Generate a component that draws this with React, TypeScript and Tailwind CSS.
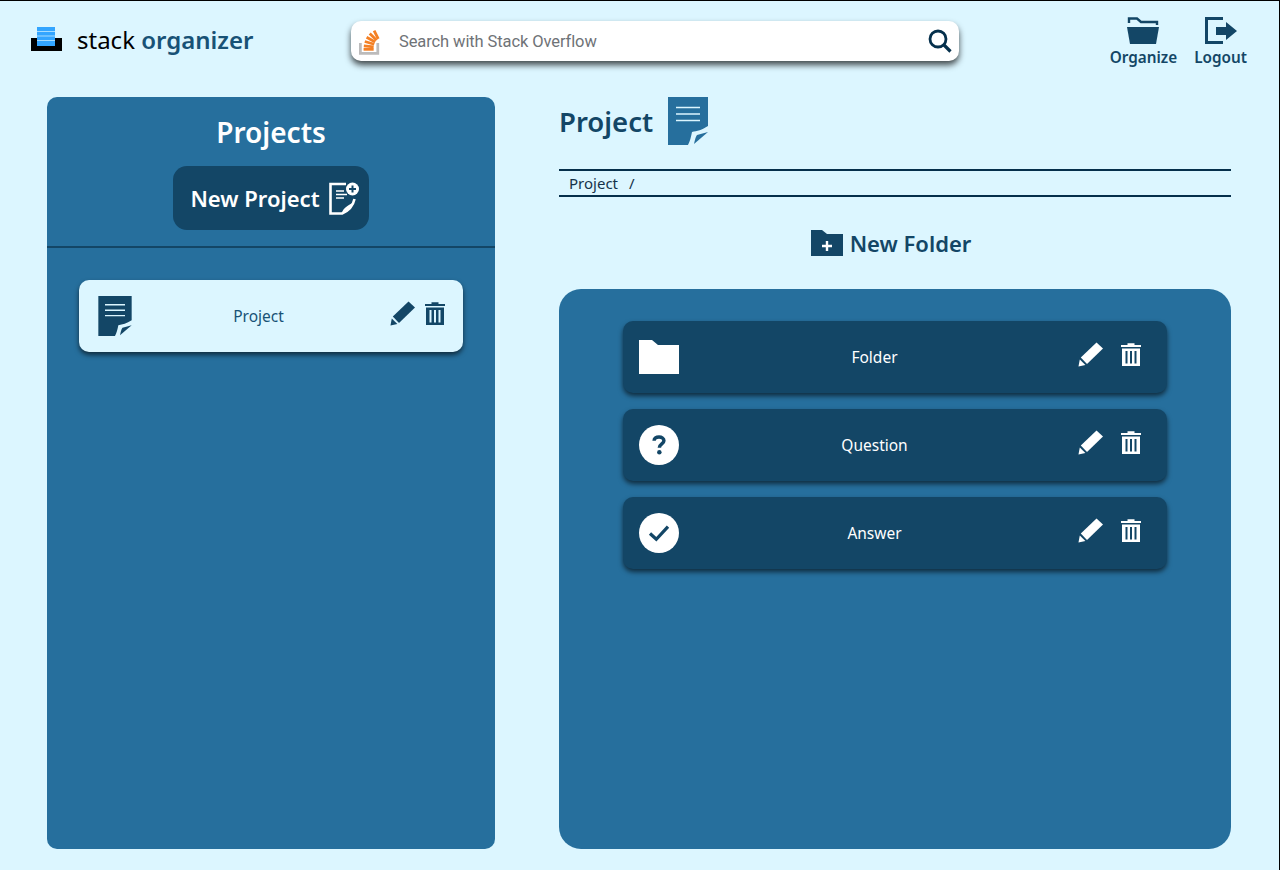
const navy = "#134666";

const NoteIcon = ({ page, fold, className }: { page: string; fold: string; className?: string }) => (
  <svg viewBox="0 0 40 48" className={className}>
    <path d="M0 0H40V29C34 33 29 34 24 35C23 40 22 44 20 48H0Z" fill={page} />
    <path d="M8 10.5H32M8 17H32M8 23.5H32" stroke={fold} strokeWidth="1.7" />
    <path d="M40 35L26 47C27 42 28 39 29 38Z" fill={page} />
  </svg>
);

const EditIcon = ({ color }: { color: string }) => (
  <svg viewBox="0 0 26 26" className="w-[26px] h-[26px]">
    <path d="M18.5 1.5L25 7.5L9 23L2.8 16.6Z" fill={color} />
    <path d="M1.8 18.4L7.4 24L0.5 25.5Z" fill={color} />
  </svg>
);

const TrashIcon = ({ color, gap }: { color: string; gap: string }) => (
  <svg viewBox="0 0 20 24" className="w-5 h-6">
    <path d="M0 3H6.5V1.2H13.5V3H20V5H0Z" fill={color} />
    <path d="M1 6.5H19V24H1Z" fill={color} />
    <path d="M5.5 9V21.5M10 9V21.5M14.5 9V21.5" stroke={gap} strokeWidth="2" />
  </svg>
);

const FolderIcon = () => (
  <svg viewBox="0 0 40 34" className="w-10 h-[34px]">
    <path d="M0 0H13L19 5H40V34H0Z" fill="#ffffff" />
  </svg>
);

const QuestionIcon = () => (
  <div className="w-10 h-10 rounded-full bg-white flex items-center justify-center">
    <svg viewBox="0 0 20 28" className="w-[14px] h-5">
      <path d="M3 8C3 4.5 6 2.5 10 2.5C14 2.5 17 4.8 17 8C17 12.5 10.5 12.5 10.5 18" fill="none" stroke={navy} strokeWidth="5" />
      <circle cx="10.5" cy="24.5" r="3.2" fill={navy} />
    </svg>
  </div>
);

const CheckIcon = () => (
  <div className="w-10 h-10 rounded-full bg-white flex items-center justify-center">
    <svg viewBox="0 0 24 20" className="w-[22px] h-[18px]">
      <path d="M2 10.5L9 17L22 3" fill="none" stroke={navy} strokeWidth="3.6" />
    </svg>
  </div>
);

const StackLogo = () => (
  <svg viewBox="0 0 31 24" className="w-[31px] h-6 shrink-0">
    <path d="M0 11H31V24H0Z" fill="#000000" />
    <path d="M6 0H24V19H6Z" fill="#33a5ff" />
    <path d="M6 4.5H24M6 9H24M6 13.5H24" stroke="#a5dcff" strokeWidth="1" />
  </svg>
);

const SoLogo = () => (
  <svg viewBox="0 0 24 28" className="w-[22px] h-[26px] mt-[2px]">
    <path d="M1.5 15V26.5H20.5V15" fill="none" stroke="#bcbbbb" strokeWidth="3" />
    <path d="M5 22H16" stroke="#f48024" strokeWidth="3" />
    <path d="M5.3 18.2L16 19.2" stroke="#f48024" strokeWidth="3" />
    <path d="M6.3 13.4L16.6 16.4" stroke="#f48024" strokeWidth="3" />
    <path d="M8.3 8.8L17.6 14" stroke="#f48024" strokeWidth="3" />
    <path d="M11.7 4.8L19.2 12" stroke="#f48024" strokeWidth="3" />
    <path d="M16.5 1.5L21 10.5" stroke="#f48024" strokeWidth="3" />
  </svg>
);

const rows = [
  { name: "Folder", icon: <FolderIcon /> },
  { name: "Question", icon: <QuestionIcon /> },
  { name: "Answer", icon: <CheckIcon /> },
];

const App = () => {
  return (
    <div className="w-[1280px] h-[870px] overflow-hidden bg-[#dcf6ff] border-t border-r border-black font-['Noto_Sans',sans-serif]">
      <header className="h-[96px] flex items-start pl-[31px]">
        <div className="flex items-center gap-[15px] w-[320px] mt-[20px] h-[36px]">
          <StackLogo />
          <span className="text-[24px] leading-[36px] pt-[1px] text-black">
            stack <span className="font-semibold text-[#185276]">organizer</span>
          </span>
        </div>
        <div className="w-[608px] h-10 mt-5 bg-white rounded-[10px] shadow-[0_4px_6px_rgba(0,0,0,0.7)] flex items-center pl-2 pr-[7px]">
          <SoLogo />
          <span className="ml-[18px] flex-1 text-[16.5px] tracking-[-0.1px] pt-[2px] text-[#6f7377] font-['Roboto',sans-serif]">
            Search with Stack Overflow
          </span>
          <svg viewBox="0 0 24 24" className="w-[24px] h-[24px]">
            <circle cx="10" cy="10" r="8" fill="none" stroke="#05304c" strokeWidth="2.8" />
            <path d="M16 16L22.5 22.5" stroke="#05304c" strokeWidth="3.2" />
          </svg>
        </div>
        <div className="flex-1 flex justify-end pr-[32px] pt-[16px] gap-[17px] text-[#134666] text-[15.3px] font-semibold">
          <div className="flex flex-col items-center">
            <svg viewBox="0 0 32 27" className="w-8 h-[27px]">
              <path d="M2 6V1.5H10L14 5H30V8" fill="none" stroke={navy} strokeWidth="2.4" />
              <path d="M0 10H32L29 27H3Z" fill={navy} />
            </svg>
            <span className="leading-[24px] mt-[1px]">Organize</span>
          </div>
          <div className="flex flex-col items-center">
            <svg viewBox="0 0 32 27" className="w-8 h-[27px]">
              <path d="M18 1.5H1.5V25.5H18" fill="none" stroke={navy} strokeWidth="3" />
              <path d="M11 10H21V5L32 14L21 23V18H11Z" fill={navy} />
            </svg>
            <span className="leading-[24px] mt-[1px]">Logout</span>
          </div>
        </div>
      </header>
      <main className="flex pl-[47px] gap-[64px]">
        <section className="w-[448px] h-[752px] bg-[#266f9d] rounded-[10px]">
          <div className="h-[151px] border-b-2 border-[#134666] flex flex-col items-center pt-[15px]">
            <h2 className="text-[28px] leading-[40px] font-semibold text-white">Projects</h2>
            <button className="mt-[14px] w-[196px] h-16 bg-[#134666] rounded-[14px] flex items-center justify-center gap-[9px] pl-[7px] text-white text-[22px] font-semibold">
              New Project
              <svg viewBox="0 0 30 33" className="w-[30px] h-[33px]">
                <path d="M17 2H1.5V31.5H13C19 29 24 24 25.5 17" fill="none" stroke="#ffffff" strokeWidth="2.6" />
                <path d="M7 9H15M7 12.5H18M7 16H15" stroke="#ffffff" strokeWidth="1.4" />
                <path d="M13 31C14 26 18 24 25 20C23 26 19 29 13 31Z" fill="#ffffff" />
                <circle cx="23.5" cy="7" r="6.5" fill="#ffffff" />
                <path d="M20 7H27M23.5 3.5V10.5" stroke={navy} strokeWidth="2" />
              </svg>
            </button>
          </div>
          <div className="px-8 pt-8">
            <div className="h-[72px] bg-[#dcf6ff] rounded-[10px] shadow-[0_3px_5px_rgba(0,0,0,0.6)] flex items-center pl-[19px] pr-[18px]">
              <NoteIcon page={navy} fold="#dcf6ff" className="w-[34px] h-10" />
              <span className="flex-1 text-center text-[15.5px] text-[#185276] pr-[5px] pt-[2px]">Project</span>
              <div className="flex items-center gap-[9px] mb-[6px]">
                <EditIcon color={navy} />
                <TrashIcon color={navy} gap="#dcf6ff" />
              </div>
            </div>
          </div>
        </section>
        <section className="w-[672px]">
          <div className="flex items-center gap-[15px] h-[48px]">
            <h1 className="text-[27.5px] font-semibold text-[#134666] leading-[48px] pt-[2px]">Project</h1>
            <NoteIcon page="#266f9d" fold="#dcf6ff" className="w-10 h-12" />
          </div>
          <div className="mt-6 h-[28px] border-y-2 border-[#052f4b] pl-[10px] text-[15px] leading-[24px] text-[#15324a]">
            Project <span className="ml-[7px]">/</span>
          </div>
          <div className="mt-[31px] flex items-center justify-center gap-[7px] text-[#134666] text-[22px] font-semibold h-[30px] pr-[8px]">
            <svg viewBox="0 0 32 26" className="w-8 h-[26px]">
              <path d="M0 0H11L16 4H32V26H0Z" fill={navy} />
              <path d="M11 16H21M16 11V21" stroke="#ffffff" strokeWidth="2.4" />
            </svg>
            New Folder
          </div>
          <div className="mt-[31px] h-[560px] bg-[#266f9d] rounded-[22px] px-16 pt-8 flex flex-col gap-4">
            {rows.map((row) => (
              <div key={row.name} className="h-[72px] shrink-0 bg-[#134666] rounded-[10px] shadow-[0_3px_5px_rgba(0,0,0,0.6)] flex items-center pl-4 pr-[26px] text-white">
                <div className="w-10 flex justify-center">{row.icon}</div>
                <span className="flex-1 text-center text-[15.5px] pr-[8px] pt-[2px]">{row.name}</span>
                <div className="flex items-center gap-[17px] mb-[6px]">
                  <EditIcon color="#ffffff" />
                  <TrashIcon color="#ffffff" gap={navy} />
                </div>
              </div>
            ))}
          </div>
        </section>
      </main>
    </div>
  );
};

export default App;
